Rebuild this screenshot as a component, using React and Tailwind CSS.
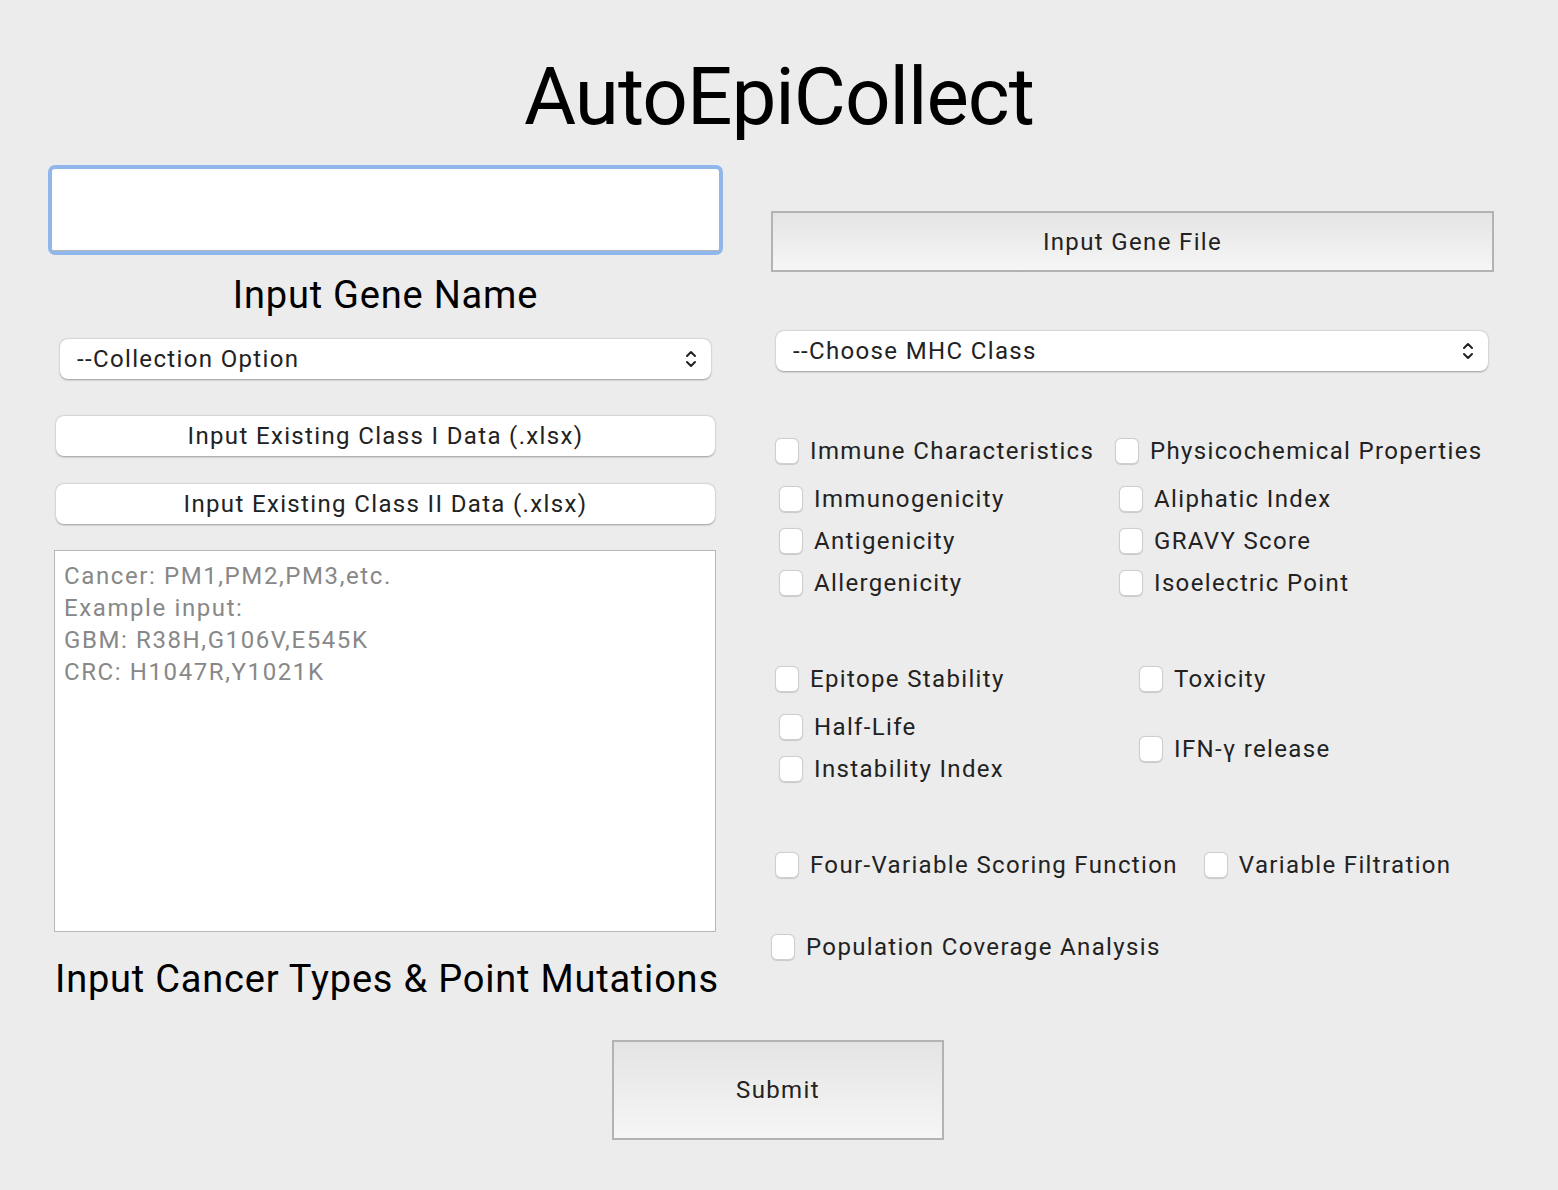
import { useState } from 'react';

const font = { fontFamily: 'Roboto, "Liberation Sans", sans-serif' };

function Chevrons() {
    return (
        <svg width="12" height="20" viewBox="0 0 12 20" fill="none" stroke="#222" strokeWidth="2" strokeLinecap="round" strokeLinejoin="round">
            <path d="M2 7 L6 3 L10 7" />
            <path d="M2 13 L6 17 L10 13" />
        </svg>
    );
}

function Select({ label, className }) {
    return (
        <div className={`flex items-center justify-between h-[40px] bg-white rounded-[8px] shadow-[0_0.5px_2px_rgba(0,0,0,0.35)] pl-[17px] pr-[14px] ${className}`}>
            <span className="text-[24px] tracking-[1.35px] text-[#222]">{label}</span>
            <Chevrons />
        </div>
    );
}

function Check({ label, checked, onChange, className = '' }) {
    return (
        <label className={`flex items-center h-[28px] gap-[11px] cursor-pointer ${className}`}>
            <span
                onClick={onChange}
                className={`w-[24px] h-[26px] rounded-[6px] border border-[#cfcfcf] shadow-[0_0.5px_1px_rgba(0,0,0,0.15)] ${checked ? 'bg-[#3b82f6]' : 'bg-white'}`}
            ></span>
            <span className="text-[24px] tracking-[1.35px] text-[#222] whitespace-nowrap">{label}</span>
        </label>
    );
}

export default function App() {
    const [checks, setChecks] = useState({});
    const toggle = (k) => setChecks(c => ({ ...c, [k]: !c[k] }));
    const cb = (k, extra = '') => (
        <Check label={k} checked={!!checks[k]} onChange={() => toggle(k)} className={extra} />
    );

    return (
        <div className="min-h-[1190px] w-full bg-[#ececec] pt-[57px]" style={font}>
            {/* Title */}
            <h1 className="text-center text-[80px] leading-[80px] tracking-[-1px] text-black">AutoEpiCollect</h1>

            <div className="flex gap-[48px] pl-[48px] mt-[28px]">
                {/* LEFT COLUMN */}
                <div className="w-[675px] flex flex-col">
                    <div className="h-[90px] rounded-[7px] border-[4px] border-[#90b7ec] bg-white">
                        <input className="w-full h-full px-2 text-[24px] outline-none border-b border-[#b5b5b5]" />
                    </div>
                    <div className="mt-[17px] h-[46px] leading-[46px] text-center text-[38px] tracking-[0.8px] text-black">Input Gene Name</div>
                    <Select label="--Collection Option" className="mt-[21px] mx-[12px]" />
                    <button className="mt-[37px] mx-[8px] h-[40px] bg-white rounded-[8px] shadow-[0_0.5px_2px_rgba(0,0,0,0.35)] text-[24px] tracking-[1.35px] text-[#222]">
                        Input Existing Class I Data (.xlsx)
                    </button>
                    <button className="mt-[28px] mx-[8px] h-[40px] bg-white rounded-[8px] shadow-[0_0.5px_2px_rgba(0,0,0,0.35)] text-[24px] tracking-[1.35px] text-[#222]">
                        Input Existing Class II Data (.xlsx)
                    </button>
                    <textarea
                        className="mt-[26px] ml-[6px] mr-[7px] h-[382px] bg-white border border-[#b8b8b8] px-[9px] py-[9px] text-[24px] leading-[32px] tracking-[1.6px] text-[#222] placeholder-[#888888] resize-none outline-none"
                        placeholder={'Cancer: PM1,PM2,PM3,etc.\nExample input:\nGBM: R38H,G106V,E545K\nCRC: H1047R,Y1021K'}
                    />
                    <div className="mt-[24px] h-[46px] leading-[46px] ml-[7px] text-[38px] tracking-[0.8px] text-black whitespace-nowrap">Input Cancer Types &amp; Point Mutations</div>
                </div>

                {/* RIGHT COLUMN */}
                <div className="w-[723px] flex flex-col">
                    <button className="mt-[46px] h-[61px] border-2 border-[#b3b3b3] bg-gradient-to-b from-[#e4e4e4] to-[#f6f6f6] text-[24px] tracking-[1.35px] text-[#222]">
                        Input Gene File
                    </button>
                    <Select label="--Choose MHC Class" className="mt-[59px] ml-[5px] mr-[6px]" />

                    {/* Immune / Physicochemical */}
                    <div className="flex mt-[66px] pl-[4px]">
                        <div className="w-[340px] flex flex-col">
                            {cb('Immune Characteristics')}
                            <div className="flex flex-col gap-[14px] mt-[20px] pl-[4px]">
                                {cb('Immunogenicity')}
                                {cb('Antigenicity')}
                                {cb('Allergenicity')}
                            </div>
                        </div>
                        <div className="flex flex-col">
                            {cb('Physicochemical Properties')}
                            <div className="flex flex-col gap-[14px] mt-[20px] pl-[4px]">
                                {cb('Aliphatic Index')}
                                {cb('GRAVY Score')}
                                {cb('Isoelectric Point')}
                            </div>
                        </div>
                    </div>

                    {/* Stability / Toxicity */}
                    <div className="flex mt-[68px] pl-[4px]">
                        <div className="w-[364px] flex flex-col">
                            {cb('Epitope Stability')}
                            <div className="flex flex-col gap-[14px] mt-[20px] pl-[4px]">
                                {cb('Half-Life')}
                                {cb('Instability Index')}
                            </div>
                        </div>
                        <div className="flex flex-col gap-[42px]">
                            {cb('Toxicity')}
                            {cb('IFN-γ release')}
                        </div>
                    </div>

                    <div className="flex mt-[68px] pl-[4px] gap-[26px]">
                        {cb('Four-Variable Scoring Function')}
                        {cb('Variable Filtration')}
                    </div>

                    <div className="flex mt-[54px]">
                        {cb('Population Coverage Analysis')}
                    </div>
                </div>
            </div>

            {/* Submit */}
            <div className="flex justify-center mt-[38px] pr-[2px]">
                <button className="w-[332px] h-[100px] border-2 border-[#b3b3b3] bg-gradient-to-b from-[#e4e4e4] to-[#f6f6f6] text-[24px] tracking-[1.35px] text-[#222]">
                    Submit
                </button>
            </div>
        </div>
    );
}
